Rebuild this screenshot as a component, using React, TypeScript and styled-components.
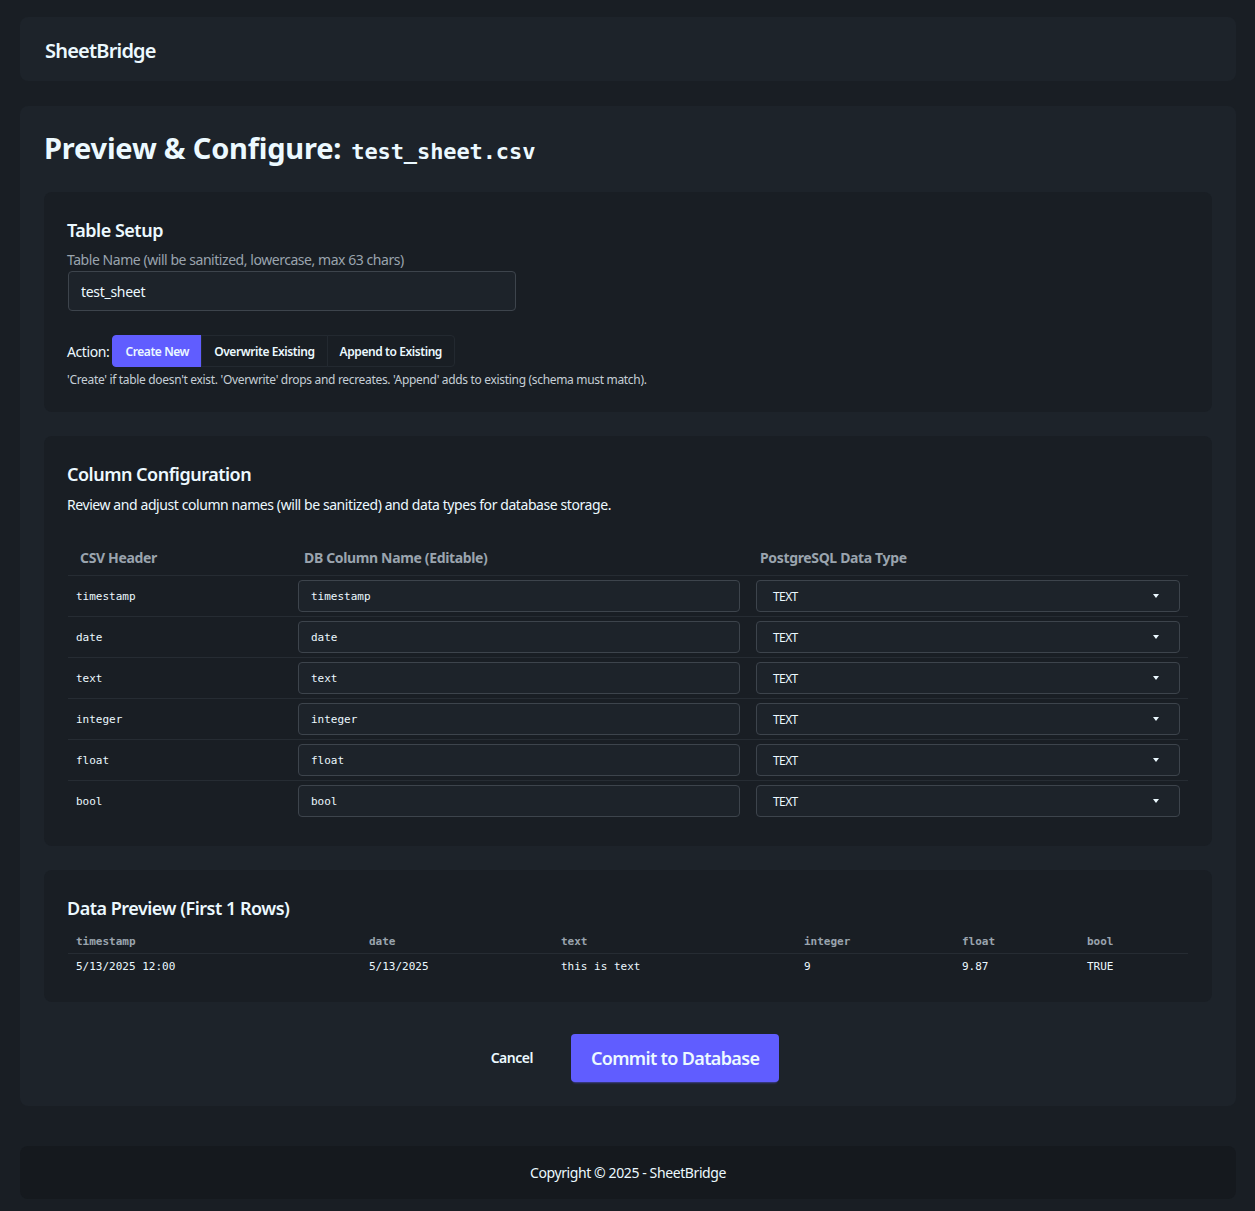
import React from "react";
import styled, { createGlobalStyle } from "styled-components";

const GlobalStyle = createGlobalStyle`
  html, body {
    margin: 0;
    padding: 0;
    background: #191e24;
    color: #ecf9ff;
    font-family: "Noto Sans", "Open Sans", sans-serif;
  }
  * { box-sizing: border-box; }
`;

const Page = styled.div`
  min-height: 1211px;
  padding: 17px 19px 12px 20px;
  display: flex;
  flex-direction: column;
  gap: 25px;
`;

const Navbar = styled.header`
  height: 64px;
  background: #1d232a;
  border-radius: 8px;
  display: flex;
  align-items: center;
  padding: 0 25px;
`;

const Brand = styled.div`
  font-size: 20px;
  font-weight: 600;
  letter-spacing: -0.8px;
  margin-top: 2px;
`;

const MainCard = styled.main`
  background: #1d232a;
  border-radius: 8px;
  padding: 24px;
  display: flex;
  flex-direction: column;
  gap: 24px;
`;

const Title = styled.h1`
  margin: 0;
  padding-top: 2px;
  font-size: 29px;
  font-weight: 700;
  line-height: 32px;
  display: flex;
  align-items: baseline;
  gap: 10px;
  letter-spacing: -0.2px;
`;

const MonoName = styled.code`
  font-family: "DejaVu Sans Mono", "Liberation Mono", monospace;
  font-size: 22px;
  font-weight: 700;
  letter-spacing: -0.1px;
`;

const Section = styled.section`
  background: #191e24;
  border-radius: 8px;
  padding: 24px;
`;

const SectionTitle = styled.h2`
  margin: 0 0 7px -1px;
  font-size: 18px;
  font-weight: 600;
  line-height: 28px;
  letter-spacing: -0.5px;
`;

const FieldLabel = styled.div`
  font-size: 14px;
  color: #9aa4ae;
  line-height: 18px;
  margin: 0 0 2px -1px;
  letter-spacing: -0.45px;
`;

const TextInput = styled.input<{ $mono?: boolean; $width?: string; $height?: number }>`
  width: ${(p) => p.$width || "100%"};
  height: ${(p) => p.$height || 32}px;
  background: #1d232a;
  border: 1px solid #3d444c;
  border-radius: 4px;
  color: #ecf9ff;
  padding: 0 12px;
  font-size: ${(p) => (p.$mono ? "11px" : "14px")};
  letter-spacing: ${(p) => (p.$mono ? "0" : "-0.3px")};
  font-family: ${(p) =>
    p.$mono ? `"DejaVu Sans Mono", "Liberation Mono", monospace` : `"Noto Sans", sans-serif`};
  outline: none;
`;

const ActionRow = styled.div`
  display: flex;
  align-items: center;
  margin: 24px 0 0 -1px;
  font-size: 14px;
  letter-spacing: -0.4px;
`;

const ActionLabel = styled.span`
  margin-right: 3px;
`;

const Join = styled.div`
  display: flex;
`;

const JoinButton = styled.button<{ $active?: boolean }>`
  height: 32px;
  padding: 0 12px;
  border: 1px solid ${(p) => (p.$active ? "#605dff" : "#232930")};
  background: ${(p) => (p.$active ? "#605dff" : "#191e24")};
  color: #ecf9ff;
  font-family: "Noto Sans", sans-serif;
  font-size: 12px;
  font-weight: 600;
  letter-spacing: -0.42px;
  margin-left: -1px;
  &:first-child { border-radius: 4px 0 0 4px; margin-left: 0; }
  &:last-child { border-radius: 0 4px 4px 0; }
`;

const Hint = styled.p`
  margin: 5px 0 0 -1px;
  font-size: 12px;
  color: #c5ced6;
  line-height: 16px;
  letter-spacing: -0.32px;
`;

const Description = styled.p`
  margin: 0 0 22px -1px;
  font-size: 14px;
  line-height: 20px;
  letter-spacing: -0.42px;
`;

const Table = styled.table`
  width: 100%;
  border-collapse: collapse;
`;

const ConfigTh = styled.th<{ $w?: string; $pl?: number }>`
  text-align: left;
  font-size: 14px;
  font-weight: 700;
  color: #9aa4ae;
  padding: 11px 12px 8px ${(p) => p.$pl ?? 12}px;
  width: ${(p) => p.$w || "auto"};
  border-bottom: 1px solid #262c33;
  letter-spacing: -0.35px;
`;

const Row = styled.tr`
  border-bottom: 1px solid #262c33;
  &:last-child { border-bottom: none; }
`;

const Td = styled.td`
  padding: 4px 8px;
  height: 41px;
  font-family: "DejaVu Sans Mono", "Liberation Mono", monospace;
  font-size: 11px;
`;

const SelectBox = styled.div`
  height: 32px;
  background: #1d232a;
  border: 1px solid #3d444c;
  border-radius: 4px;
  display: flex;
  align-items: center;
  justify-content: space-between;
  padding: 0 20px 0 16px;
  font-family: "Noto Sans", sans-serif;
  font-size: 12px;
  letter-spacing: -0.6px;
`;

const Caret = styled.span`
  width: 0;
  height: 0;
  border-left: 3.5px solid transparent;
  border-right: 3.5px solid transparent;
  border-top: 4px solid #ecf9ff;
`;

const PreviewTh = styled.th<{ $w: string }>`
  text-align: left;
  width: ${(p) => p.$w};
  font-family: "DejaVu Sans Mono", "Liberation Mono", monospace;
  font-size: 11px;
  font-weight: 700;
  color: #9aa4ae;
  padding: 6px 8px 5px;
  border-bottom: 1px solid #262c33;
`;

const PreviewTd = styled.td`
  font-family: "DejaVu Sans Mono", "Liberation Mono", monospace;
  font-size: 11px;
  padding: 6px 8px 5px;
`;

const Actions = styled.div`
  display: flex;
  justify-content: center;
  align-items: center;
  gap: 16px;
  margin-top: 8px;
  padding-right: 8px;
`;

const GhostButton = styled.button`
  background: transparent;
  border: none;
  color: #ecf9ff;
  font-family: "Noto Sans", sans-serif;
  font-size: 14px;
  font-weight: 600;
  height: 48px;
  padding: 0 22px;
  letter-spacing: -0.5px;
`;

const PrimaryButton = styled.button`
  background: #605dff;
  border: none;
  border-radius: 4px;
  color: #ecf9ff;
  font-family: "Noto Sans", sans-serif;
  font-size: 18px;
  font-weight: 600;
  height: 48px;
  padding: 0 20px;
  letter-spacing: -0.65px;
  box-shadow: 0 3px 2px -2px rgba(96, 93, 255, 0.5);
`;

const Footer = styled.footer`
  margin-top: 15px;
  height: 53px;
  background: #15191e;
  border-radius: 8px;
  display: flex;
  align-items: center;
  justify-content: center;
  font-size: 14px;
  letter-spacing: -0.4px;
`;

const columns = ["timestamp", "date", "text", "integer", "float", "bool"];

const previewCols: { name: string; w: string; value: string }[] = [
  { name: "timestamp", w: "293px", value: "5/13/2025 12:00" },
  { name: "date", w: "192px", value: "5/13/2025" },
  { name: "text", w: "243px", value: "this is text" },
  { name: "integer", w: "158px", value: "9" },
  { name: "float", w: "125px", value: "9.87" },
  { name: "bool", w: "auto", value: "TRUE" },
];

export default function App() {
  return (
    <>
      <GlobalStyle />
      <Page>
        <Navbar>
          <Brand>SheetBridge</Brand>
        </Navbar>

        <MainCard>
          <Title>
            Preview &amp; Configure: <MonoName>test_sheet.csv</MonoName>
          </Title>

          <Section>
            <SectionTitle>Table Setup</SectionTitle>
            <FieldLabel>Table Name (will be sanitized, lowercase, max 63 chars)</FieldLabel>
            <TextInput defaultValue="test_sheet" $width="448px" $height={40} />
            <ActionRow>
              <ActionLabel>Action:</ActionLabel>
              <Join>
                <JoinButton $active>Create New</JoinButton>
                <JoinButton>Overwrite Existing</JoinButton>
                <JoinButton>Append to Existing</JoinButton>
              </Join>
            </ActionRow>
            <Hint>
              'Create' if table doesn't exist. 'Overwrite' drops and recreates. 'Append' adds to
              existing (schema must match).
            </Hint>
          </Section>

          <Section>
            <SectionTitle>Column Configuration</SectionTitle>
            <Description>
              Review and adjust column names (will be sanitized) and data types for database
              storage.
            </Description>
            <Table>
              <thead>
                <tr>
                  <ConfigTh $w="222px">CSV Header</ConfigTh>
                  <ConfigTh $w="458px" $pl={14}>DB Column Name (Editable)</ConfigTh>
                  <ConfigTh>PostgreSQL Data Type</ConfigTh>
                </tr>
              </thead>
              <tbody>
                {columns.map((c) => (
                  <Row key={c}>
                    <Td>{c}</Td>
                    <Td>
                      <TextInput $mono defaultValue={c} />
                    </Td>
                    <Td>
                      <SelectBox>
                        TEXT
                        <Caret />
                      </SelectBox>
                    </Td>
                  </Row>
                ))}
              </tbody>
            </Table>
          </Section>

          <Section>
            <SectionTitle>Data Preview (First 1 Rows)</SectionTitle>
            <Table>
              <thead>
                <tr>
                  {previewCols.map((c) => (
                    <PreviewTh key={c.name} $w={c.w}>
                      {c.name}
                    </PreviewTh>
                  ))}
                </tr>
              </thead>
              <tbody>
                <tr>
                  {previewCols.map((c) => (
                    <PreviewTd key={c.name}>{c.value}</PreviewTd>
                  ))}
                </tr>
              </tbody>
            </Table>
          </Section>

          <Actions>
            <GhostButton>Cancel</GhostButton>
            <PrimaryButton>Commit to Database</PrimaryButton>
          </Actions>
        </MainCard>

        <Footer>Copyright © 2025 - SheetBridge</Footer>
      </Page>
    </>
  );
}
